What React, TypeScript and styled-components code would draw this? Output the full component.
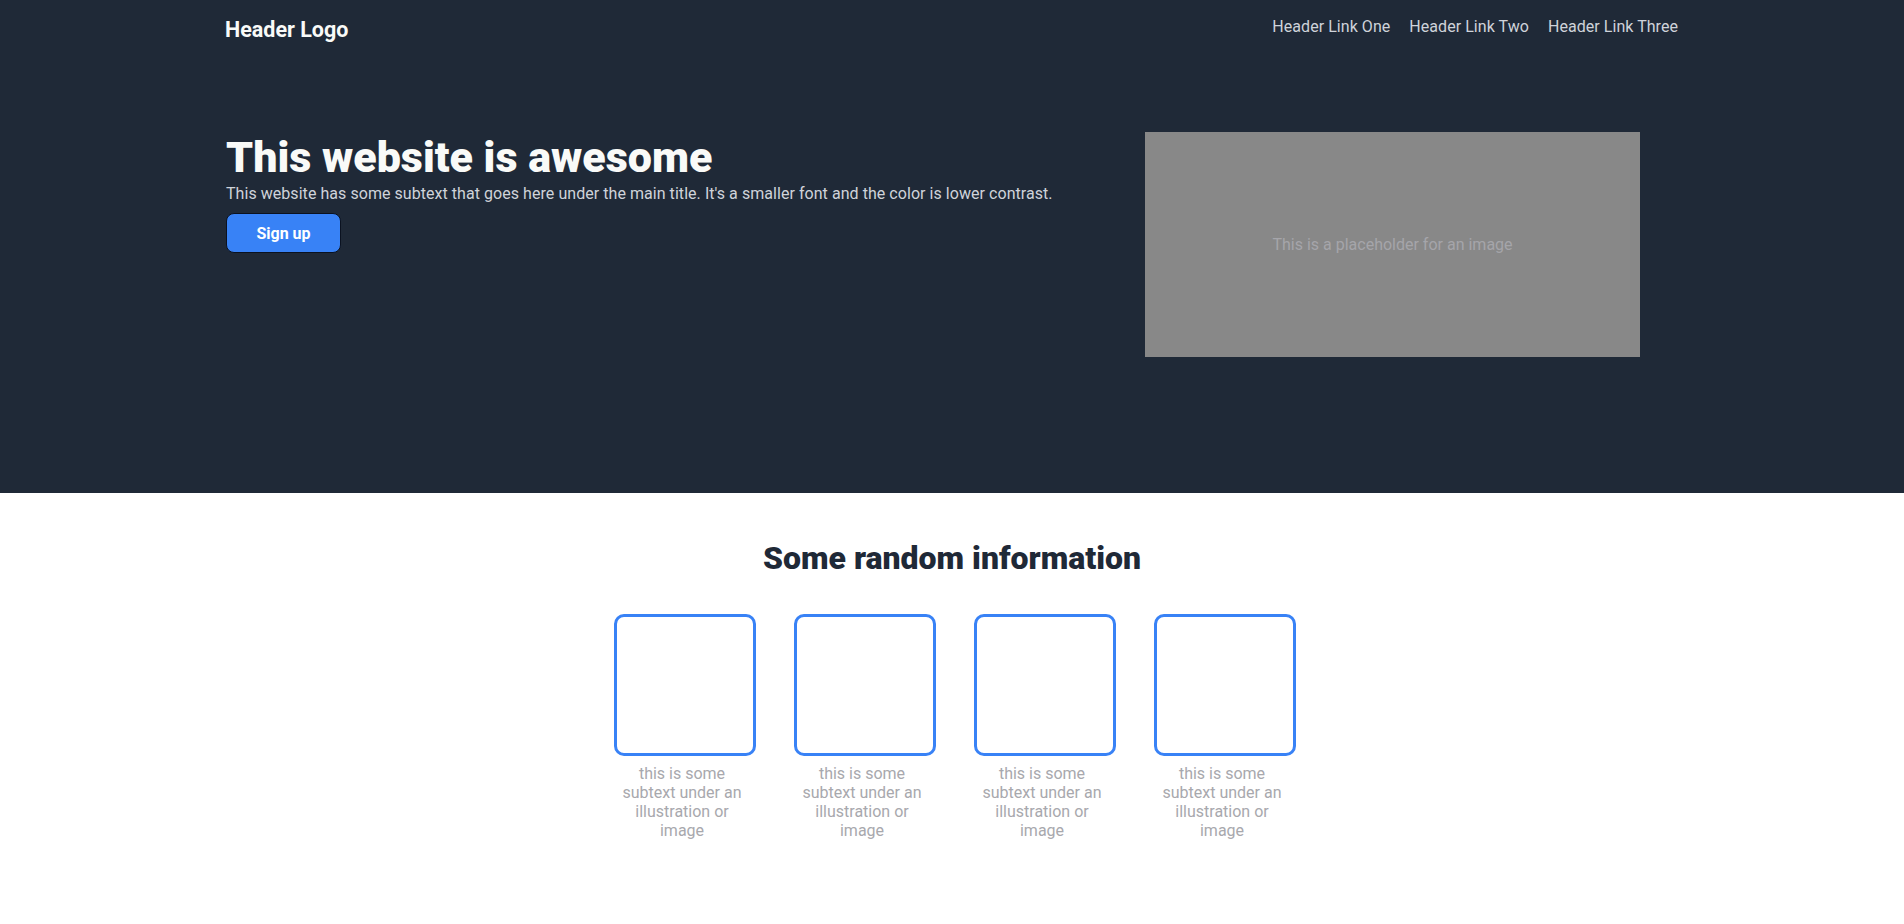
import React from 'react';
import styled, { createGlobalStyle } from 'styled-components';

const GlobalStyle = createGlobalStyle`
  * {
    box-sizing: border-box;
  }

  body {
    margin: 0;
    font-family: Roboto, "Liberation Sans", Arial, sans-serif;
    background: #ffffff;
  }
`;

const DarkSection = styled.div`
  background: #1f2937;
  height: 493px;
`;

const Header = styled.header`
  display: flex;
  justify-content: space-between;
  align-items: flex-start;
  padding: 17px 226px 0 225px;
`;

const Logo = styled.div`
  color: #f9faf8;
  font-size: 21.5px;
  font-weight: 700;
`;

const NavLinks = styled.nav`
  display: flex;
  gap: 19px;
`;

const NavLink = styled.a`
  color: #cfd3da;
  font-size: 16px;
  letter-spacing: 0.05px;
  text-decoration: none;
  cursor: pointer;
`;

const Hero = styled.section`
  display: flex;
  align-items: flex-start;
  padding: 90px 264px 0 226px;
`;

const HeroText = styled.div`
  display: flex;
  flex-direction: column;
  align-items: flex-start;
`;

const Title = styled.h1`
  margin: 0;
  color: #f9faf8;
  font-size: 43px;
  font-weight: 900;
`;

const Subtext = styled.p`
  margin: 2px 0 0;
  color: #cfd3da;
  font-size: 16px;
  letter-spacing: 0.05px;
`;

const SignUpButton = styled.button`
  margin-top: 10px;
  width: 115px;
  height: 40px;
  background: #3882f6;
  color: #ffffff;
  border: 1px solid #0b1220;
  border-radius: 8px;
  font-family: inherit;
  font-size: 16px;
  font-weight: 700;
  cursor: pointer;
`;

const ImagePlaceholder = styled.div`
  margin-left: auto;
  width: 495px;
  height: 225px;
  flex: none;
  background: #888888;
  color: #a5a5aa;
  font-size: 16px;
  display: flex;
  align-items: center;
  justify-content: center;
`;

const InfoSection = styled.section`
  display: flex;
  flex-direction: column;
  align-items: center;
  padding-top: 46px;
`;

const InfoTitle = styled.h2`
  margin: 0;
  color: #1f2937;
  font-size: 32px;
  font-weight: 900;
`;

const CardRow = styled.div`
  display: flex;
  gap: 44px;
  margin-top: 37px;
`;

/* the frame is a bit wider than its column, so the caption sits left of centre */
const Card = styled.div`
  width: 136px;
  display: flex;
  flex-direction: column;
  align-items: center;
`;

const CardFrame = styled.div`
  align-self: flex-start;
  width: 142px;
  height: 142px;
  flex: none;
  border: 3px solid #3882f6;
  border-radius: 10px;
`;

const CardText = styled.p`
  margin: 8px 0 0;
  color: #a8a8ad;
  font-size: 16px;
  text-align: center;
`;

const cards = [1, 2, 3, 4];

export default function App() {
  return (
    <>
      <GlobalStyle />
      <DarkSection>
        <Header>
          <Logo>Header Logo</Logo>
          <NavLinks>
            <NavLink>Header Link One</NavLink>
            <NavLink>Header Link Two</NavLink>
            <NavLink>Header Link Three</NavLink>
          </NavLinks>
        </Header>
        <Hero>
          <HeroText>
            <Title>This website is awesome</Title>
            <Subtext>
              This website has some subtext that goes here under the main title. It's a smaller font and the color is lower contrast.
            </Subtext>
            <SignUpButton>Sign up</SignUpButton>
          </HeroText>
          <ImagePlaceholder>This is a placeholder for an image</ImagePlaceholder>
        </Hero>
      </DarkSection>
      <InfoSection>
        <InfoTitle>Some random information</InfoTitle>
        <CardRow>
          {cards.map((n) => (
            <Card key={n}>
              <CardFrame />
              <CardText>this is some subtext under an illustration or image</CardText>
            </Card>
          ))}
        </CardRow>
      </InfoSection>
    </>
  );
}
